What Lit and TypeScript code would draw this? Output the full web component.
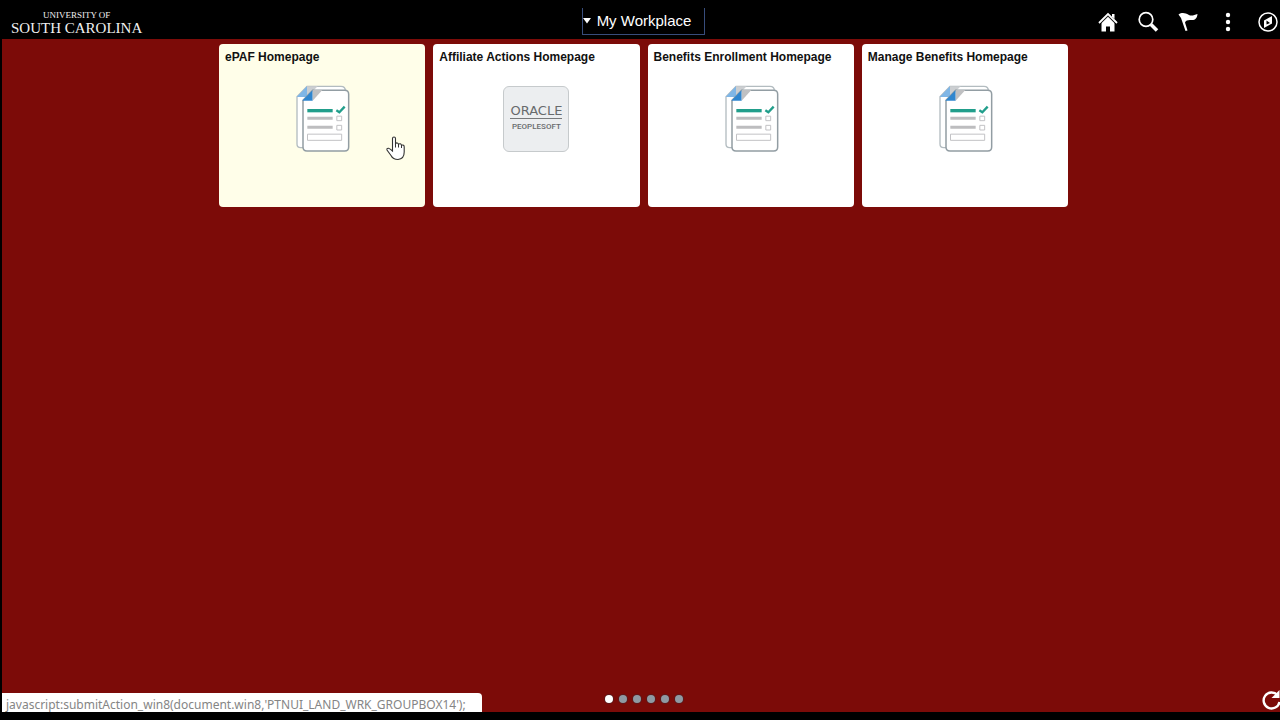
import { LitElement, html, css, svg } from "lit";
import { customElement, property } from "lit/decorators.js";

@customElement("forms-icon")
class FormsIcon extends LitElement {
  static styles = css`
    :host { display: block; }
    svg { display: block; overflow: visible; }
  `;
  render() {
    return html`<svg width="54" height="67" viewBox="30 25 162 201" aria-hidden="true">
      <path d="M66 26H168Q181 26 181 39V197Q181 210 168 210H47Q36 210 36 199V57Z" fill="#fff" stroke="#b3bcc0" stroke-width="4"/>
      <path d="M35 58 66 26V58Z" fill="#7fb6e6"/>
      <path d="M66 26H98L66 58Z" fill="#cbced1"/>
      <path d="M83 38H179Q191 38 191 50V208Q191 220 179 220H66Q54 220 54 208V68Z" fill="#fff" stroke="#929da3" stroke-width="4.500"/>
      <path d="M52 69 83 37V69Z" fill="#2f86cf"/>
      <path d="M83 37H112L83 69Z" fill="#bfc0c2"/>
      <path d="M67 99H143" stroke="#219e8b" stroke-width="10"/>
      <path d="M67 122H143M67 149H143" stroke="#bdbdbf" stroke-width="9"/>
      <path d="M154 98 163 104 179 87" fill="none" stroke="#219e8b" stroke-width="7"/>
      <path d="M155.500 115.500H170V129H155.500ZM155.500 143H170V157H155.500ZM67.500 169.500H170V188H67.500Z" fill="#fff" stroke="#bdbdc1" stroke-width="2.800"/>
    </svg>`;
  }
}

@customElement("home-tile")
class HomeTile extends LitElement {
  @property() label = "";
  @property() icon = "forms";
  @property({ type: Boolean, reflect: true }) hovered = false;

  static styles = css`
    :host { display: block; }
    .tile {
      display: flex; flex-direction: column; align-items: center;
      width: 100%; height: 163px; box-sizing: border-box; padding: 5px 6px;
      border: 0; border-radius: 4px; background: #fff; color: #111;
      font-family: "Liberation Sans", Arial, sans-serif; cursor: pointer;
    }
    :host([hovered]) .tile { background: #fffee9; }
    .label {
      align-self: stretch; text-align: left; white-space: nowrap;
      font-size: 12px; line-height: 16px; font-weight: 700;
    }
    .picture { margin-top: 21px; }
    .brand {
      display: flex; flex-direction: column; align-items: center;
      box-sizing: border-box; width: 66px; height: 66px; padding-top: 17px;
      border: 1px solid #c6cacc; border-radius: 6px; background: #eceef0; color: #686b6d;
    }
    .oracle { font: 13px/14px "DejaVu Sans", sans-serif; }
    .product {
      width: 52px; border-top: 1px solid #77797b; padding-top: 2px; text-align: center;
      font: 500 8px/12px Roboto, sans-serif;
    }
  `;

  render() {
    return html`<button class="tile" type="button">
      <span class="label">${this.label}</span>
      <span class="picture">
        ${this.icon === "brand"
          ? html`<span class="brand"><span class="oracle">ORACLE</span><span class="product">PEOPLESOFT</span></span>`
          : html`<forms-icon></forms-icon>`}
      </span>
    </button>`;
  }
}

const tools = [
  { name: "Home", art: svg`<path d="M12 6 18.500 12.500V21.500H14V16.500H10V21.500H5.500V12.500Z" fill="#fff"/><path d="M16 4H18.500V9L16 6.500Z" fill="#fff"/><path d="M3 13 12 4 21 13" fill="none" stroke="#fff" stroke-width="1.800"/><path d="M4 14.200 12 6.300 20 14.200" fill="none" stroke="#000" stroke-width=".9"/>` },
  { name: "Search", art: svg`<circle cx="10" cy="9.500" r="6.800" fill="none" stroke="#fff" stroke-width="1.700"/><path d="M15 14.500 21 20.500" stroke="#fff" stroke-width="3.500"/>` },
  { name: "Notifications", art: svg`<path d="M2.500 4.500C6 2 9.500 3 12.500 4.800C15.500 6.500 18 5.200 21.500 4C21 8.500 19 10.500 15 10C12 9.800 10 10.300 9 12.500L11.500 20.500 9.500 21 5 8Z" fill="#fff"/>` },
  { name: "Actions", art: svg`<circle cx="12" cy="5" r="2.200" fill="#fff"/><circle cx="12" cy="12" r="2.200" fill="#fff"/><circle cx="12" cy="19" r="2.200" fill="#fff"/>` },
  { name: "NavBar", art: svg`<circle cx="12" cy="12" r="9" fill="none" stroke="#fff" stroke-width="1.500"/><path d="M16 6V13.500L8 18V10.500Z" fill="#fff"/><path d="M10.500 10.500 14 13 10.500 14.500Z" fill="#000"/>` },
];

const tiles = [
  { label: "ePAF Homepage", icon: "forms" },
  { label: "Affiliate Actions Homepage", icon: "brand" },
  { label: "Benefits Enrollment Homepage", icon: "forms" },
  { label: "Manage Benefits Homepage", icon: "forms" },
];

@customElement("app-root")
class AppRoot extends LitElement {
  static styles = css`
    :host {
      display: block; background: #000; overflow: hidden;
      font-family: "Liberation Sans", Arial, sans-serif;
    }
    button { padding: 0; border: 0; background: none; color: inherit; font: inherit; cursor: pointer; }
    .page {
      display: flex; flex-direction: column; box-sizing: border-box;
      min-height: 100vh; margin-right: -5px; padding: 0 0 8px 2px; position: relative;
    }
    .bar {
      display: grid; grid-template-columns: 1fr auto 1fr; align-items: center;
      height: 39px; color: #fff;
    }
    .logo {
      justify-self: start; display: flex; flex-direction: column; align-items: center;
      margin-left: 9px; padding-top: 6px; color: #f1f1f1; text-decoration: none;
      font-family: "Liberation Serif", serif; white-space: nowrap;
    }
    .over { font-size: 9px; line-height: 10px; }
    .name { font-size: 15px; line-height: 16px; }
    .chooser {
      display: flex; align-items: center; gap: 5px; height: 27px; margin-top: 4px;
      padding: 0 13px 1px 0; border: 1px solid #384d7c; border-top: 0;
      font-size: 15px; line-height: 20px;
    }
    .caret { display: block; }
    .tools { justify-self: end; display: flex; gap: 16px; margin-right: 5px; padding-top: 4px; }
    .tools button, .tools svg { display: block; width: 24px; height: 24px; }
    main {
      flex: 1; display: flex; flex-direction: column; align-items: center;
      background: #7c0b08; position: relative; padding: 5px 0 9px;
    }
    .grid {
      display: grid; grid-template-columns: repeat(4, 1fr); gap: 8px;
      width: 100%; max-width: 849px;
    }
    .cell { position: relative; }
    .pointer { position: absolute; left: 167px; top: 92px; pointer-events: none; }
    .dots { display: flex; gap: 6px; margin-top: auto; }
    .dot { width: 8px; height: 8px; border-radius: 50%; background: #8f9aa3; box-shadow: 0 0 0 1px #5b1a1d; }
    .dot.on { background: #fff; }
    .refresh { position: absolute; right: 2px; bottom: 1px; width: 22px; height: 22px; }
    .refresh svg { display: block; }
    .status {
      position: absolute; left: 2px; bottom: 8px;
      padding: 5px 16px 0 4px; white-space: nowrap;
      border-radius: 0 4px 0 0; background: #fff; color: #858585;
      font: 12px/14px "Noto Sans", sans-serif;
    }
  `;

  render() {
    return html`<div class="page">
      <header class="bar">
        <a class="logo" href="#"><span class="over">UNIVERSITY OF</span><span class="name">SOUTH CAROLINA</span></a>
        <button class="chooser" type="button" aria-haspopup="menu">
          <svg class="caret" width="9" height="6" viewBox="0 0 9 6" aria-hidden="true"><path d="M0 0H8L4 5.500Z" fill="#fff"/></svg>
          <span>My Workplace</span>
        </button>
        <nav class="tools">
          ${tools.map((t) => html`<button type="button" aria-label=${t.name}><svg viewBox="0 0 24 24" aria-hidden="true">${t.art}</svg></button>`)}
        </nav>
      </header>
      <main>
        <div class="grid">
          ${tiles.map((t, i) => html`<div class="cell">
            <home-tile label=${t.label} icon=${t.icon} ?hovered=${i === 0}></home-tile>
            ${i === 0
              ? html`<svg class="pointer" width="20" height="25" viewBox="0 0 20 25" aria-hidden="true"><path d="M6.500 15V2.500Q6.500 1 8 1T9.500 2.500V7.500Q11.500 6 12.500 8.200Q14.500 7 15.500 9.200Q18.200 8.500 18.200 11V16Q18.200 23 12 23.500Q7 23.500 5 19.500L1 14Q.5 12 2.500 12.200Q4 12.500 6.500 15Z" fill="#fff" stroke="#333" stroke-width="1.100"/><path d="M9.500 7V11.500M12.500 8V11.500M15.500 9V12" stroke="#333" stroke-width="1"/></svg>`
              : ""}
          </div>`)}
        </div>
        <div class="dots">
          ${[1, 2, 3, 4, 5, 6].map((n) => html`<button type="button" class="dot ${n === 1 ? "on" : ""}" aria-label="Page ${n}"></button>`)}
        </div>
        <button class="refresh" type="button" aria-label="Refresh">
          <svg width="22" height="22" viewBox="0 0 22 22" aria-hidden="true"><path d="M16.500 6A8 8 0 1 0 18.500 13" fill="none" stroke="#fff" stroke-width="2.400"/><path d="M18.500 1V9H10.500Z" fill="#fff"/></svg>
        </button>
      </main>
      <div class="status">javascript:submitAction_win8(document.win8,'PTNUI_LAND_WRK_GROUPBOX14');</div>
    </div>`;
  }
}
